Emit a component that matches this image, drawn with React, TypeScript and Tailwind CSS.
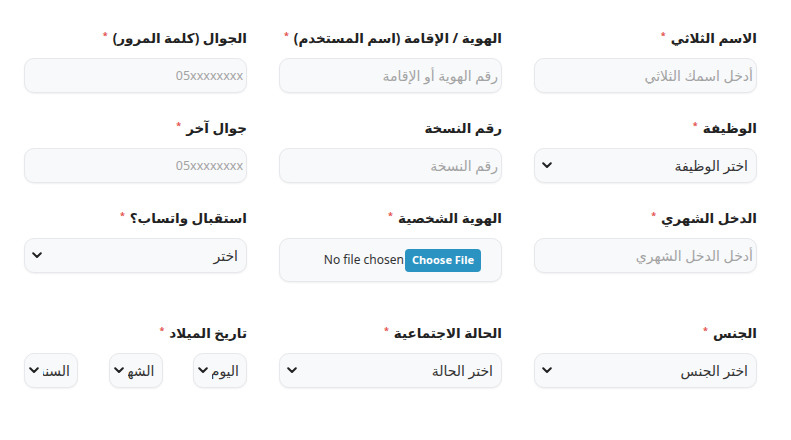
import React from "react";

const font = { fontFamily: '"Noto Sans", "DejaVu Sans", sans-serif' };

function Label({ text, required = true }: { text: string; required?: boolean }) {
  return (
    <div className="h-5 flex items-center mb-[10px] text-[13.5px] font-bold text-[#222] leading-5">
      <span>{text}</span>
      {required && <span className="text-[#e2504c] text-[9px] mr-[5px] -mt-[4px]">*</span>}
    </div>
  );
}

const boxCls =
  "w-full h-[35px] rounded-[10px] border border-[#e6e8eb] bg-[#f8f9fb] shadow-[0_1px_2px_rgba(0,0,0,0.06)]";

function TextInput({ placeholder, small = false }: { placeholder: string; small?: boolean }) {
  return (
    <input
      className={
        boxCls +
        " pr-[3px] pl-2 text-[#333] placeholder:text-[#a3a3a3] outline-none " +
        (small ? "text-[12.5px]" : "text-[14px]")
      }
      placeholder={placeholder}
      style={font}
    />
  );
}

function Chevron() {
  return (
    <svg width="10" height="7" viewBox="0 0 10 7" className="pointer-events-none">
      <path d="M1.2 1.2 L5 5 L8.8 1.2" fill="none" stroke="#222" strokeWidth="2" strokeLinecap="round" strokeLinejoin="round" />
    </svg>
  );
}

function Select({ text, className = "" }: { text: string; className?: string }) {
  return (
    <div className={"relative " + className}>
      <select
        className={boxCls + " appearance-none pr-2 pl-5 text-[14px] text-[#333] outline-none"}
        style={font}
        defaultValue=""
      >
        <option value="">{text}</option>
      </select>
      <div className="absolute left-[8px] top-0 bottom-0 flex items-center">
        <Chevron />
      </div>
    </div>
  );
}

function SmallSelect({ text }: { text: string }) {
  return (
    <div className="relative w-[54px]">
      <select
        className={boxCls + " appearance-none pr-[7px] pl-[18px] text-[14px] text-[#333] outline-none"}
        style={font}
        defaultValue=""
      >
        <option value="">{text}</option>
      </select>
      <div className="absolute left-[5px] top-0 bottom-0 flex items-center">
        <Chevron />
      </div>
    </div>
  );
}

function FileInput() {
  return (
    <div
      className="w-full h-[44px] rounded-[10px] border border-[#e6e8eb] bg-[#f8f9fb] shadow-[0_1px_2px_rgba(0,0,0,0.06)] flex items-center pr-[20px]"
      style={font}
    >
      <span className="h-[23px] px-[7px] rounded-[4px] bg-[#2a93c1] text-white text-[11px] font-bold flex items-center" dir="ltr">
        Choose File
      </span>
      <span className="text-[12px] text-[#333] mr-[1px]" dir="ltr">No file chosen</span>
    </div>
  );
}

export default function App() {
  return (
    <div dir="rtl" className="w-[791px] h-[440px] bg-white pt-[28px] pr-[34px] pl-[24px]" style={font}>
      <div className="grid grid-cols-[223px_223px_223px] gap-x-[32px]">
        <div>
          <Label text="الاسم الثلاثي" />
          <TextInput placeholder="أدخل اسمك الثلاثي" />
        </div>
        <div>
          <Label text="الهوية / الإقامة (اسم المستخدم)" />
          <TextInput placeholder="رقم الهوية أو الإقامة" />
        </div>
        <div>
          <Label text="الجوال (كلمة المرور)" />
          <TextInput placeholder="05xxxxxxxx" small />
        </div>
      </div>

      <div className="grid grid-cols-[223px_223px_223px] gap-x-[32px] mt-[25px]">
        <div>
          <Label text="الوظيفة" />
          <Select text="اختر الوظيفة" />
        </div>
        <div>
          <Label text="رقم النسخة" required={false} />
          <TextInput placeholder="رقم النسخة" />
        </div>
        <div>
          <Label text="جوال آخر" />
          <TextInput placeholder="05xxxxxxxx" small />
        </div>
      </div>

      <div className="grid grid-cols-[223px_223px_223px] gap-x-[32px] mt-[25px] items-start">
        <div>
          <Label text="الدخل الشهري" />
          <TextInput placeholder="أدخل الدخل الشهري" />
        </div>
        <div>
          <Label text="الهوية الشخصية" />
          <FileInput />
        </div>
        <div>
          <Label text="استقبال واتساب؟" />
          <Select text="اختر" />
        </div>
      </div>

      <div className="grid grid-cols-[223px_223px_223px] gap-x-[32px] mt-[41px]">
        <div>
          <Label text="الجنس" />
          <Select text="اختر الجنس" />
        </div>
        <div>
          <Label text="الحالة الاجتماعية" />
          <Select text="اختر الحالة" />
        </div>
        <div>
          <Label text="تاريخ الميلاد" />
          <div className="flex justify-between">
            <SmallSelect text="اليوم" />
            <SmallSelect text="الشهر" />
            <SmallSelect text="السنة" />
          </div>
        </div>
      </div>
    </div>
  );
}
